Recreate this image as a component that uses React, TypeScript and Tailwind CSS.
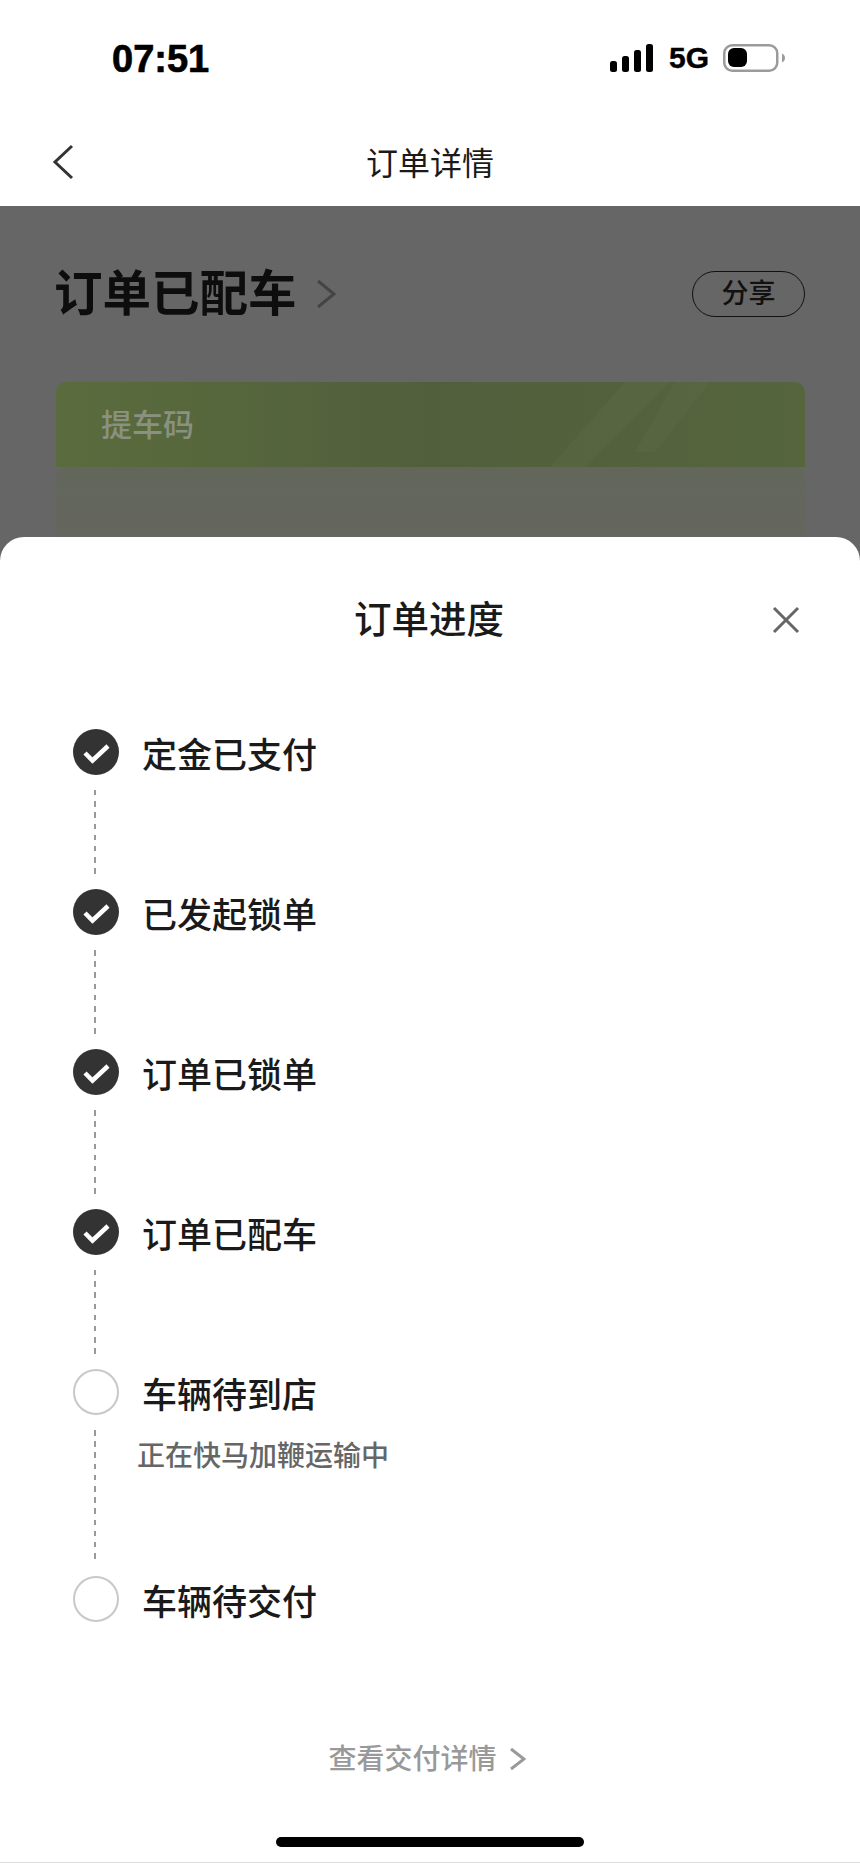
const CJK = "font-['Inter','Noto_Sans_CJK_SC',sans-serif]";

type Step = {
  label: string;
  done: boolean;
  note?: string;
};

const steps: Step[] = [
  { label: "定金已支付", done: true },
  { label: "已发起锁单", done: true },
  { label: "订单已锁单", done: true },
  { label: "订单已配车", done: true },
  { label: "车辆待到店", done: false, note: "正在快马加鞭运输中" },
  { label: "车辆待交付", done: false },
];

function StatusBar() {
  return (
    <div className="flex h-[90px] items-end justify-between pb-[16px] pl-[112px] pr-[75px]">
      <span className="font-['Liberation_Sans',sans-serif] text-[38px] leading-[30px] font-bold text-black [-webkit-text-stroke:0.7px_black]">07:51</span>
      <div className="mb-[2px] flex items-center">
        <svg width="44" height="28" viewBox="0 0 44 28" fill="#000">
          <rect x="0" y="17" width="7" height="11" rx="2.5" />
          <rect x="12" y="12" width="7" height="16" rx="2.5" />
          <rect x="24" y="6" width="7" height="22" rx="2.5" />
          <rect x="36" y="0" width="7" height="28" rx="2.5" />
        </svg>
        <span className="ml-[15px] font-['Liberation_Sans',sans-serif] text-[30px] leading-[28px] font-bold text-black [-webkit-text-stroke:0.4px_black]">5G</span>
        <svg className="ml-[14px]" width="62" height="28" viewBox="0 0 62 28">
          <rect x="1.25" y="1.25" width="53" height="25.5" rx="8" fill="none" stroke="#9b9b9b" strokeWidth="2.5" />
          <rect x="5" y="4" width="19" height="19" rx="6" fill="#000" />
          <path d="M59 9.500c1.800.8 3 2.500 3 4.500s-1.200 3.700-3 4.500z" fill="#9b9b9b" />
        </svg>
      </div>
    </div>
  );
}

function NavBar() {
  return (
    <div className="relative flex h-[116px] items-start justify-center pt-[56px]">
      <svg className="absolute left-[52px] top-[54px]" width="22" height="36" viewBox="0 0 22 36" fill="none" stroke="#333" strokeWidth="3">
        <path d="M20 2 3 18l17 16" />
      </svg>
      <span className={`${CJK} text-[32px] leading-[36px] text-[#1a1a1a]`}>订单详情</span>
    </div>
  );
}

function Backdrop() {
  return (
    <div className="h-[331px] overflow-hidden pl-[56px] pr-[55px] pt-[65px]">
      <div className="flex h-[46px] items-center justify-between">
        <div className="flex items-center">
          <span className={`${CJK} -ml-[2px] text-[48.500px] leading-[56px] font-semibold text-[#0d0d0d]`}>订单已配车</span>
          <svg className="ml-[19px]" width="20" height="30" viewBox="0 0 20 30" fill="none" stroke="#444" strokeWidth="3">
            <path d="m2 2 16 13L2 28" />
          </svg>
        </div>
        <div className="flex h-[46px] w-[113px] items-center justify-center rounded-[23px] border border-[#111]">
          <span className={`${CJK} text-[27px] leading-[32px] font-medium text-[#111]`}>分享</span>
        </div>
      </div>
      <div className="relative mt-[65px] h-[85px] rounded-t-[10px] bg-gradient-to-r from-[#5a6c3d] via-[#515f3c] to-[#55653c] px-[45px] pt-[25px]">
        <span className={`${CJK} text-[31px] leading-[36px] font-medium text-[#8a9180]`}>提车码</span>
        <svg className="absolute right-[85px] top-0" width="170" height="85" viewBox="0 0 170 85" fill="#fff" fillOpacity="0.025">
          <path d="M75 0h45L35 85H0z" />
          <path d="M125 0h35L105 70H85z" />
        </svg>
      </div>
      <div className="h-[80px] rounded-t-[10px] bg-gradient-to-b from-[#63675a] to-[#656660]" />
    </div>
  );
}

function StepIcon({ done }: { done: boolean }) {
  if (!done) {
    return <div className="h-[46px] w-[46px] shrink-0 rounded-full border-[2.5px] border-[#c8c8c8]" />;
  }
  return (
    <div className="flex h-[46px] w-[46px] shrink-0 items-center justify-center rounded-full bg-[#333]">
      <svg width="46" height="46" viewBox="0 0 46 46" fill="none" stroke="#fff" strokeWidth="4.500">
        <path d="m12 24 7.500 7.500L35 17" />
      </svg>
    </div>
  );
}

function StepRow({ step, last }: { step: Step; last: boolean }) {
  return (
    <div className="flex">
      <div className="flex w-[46px] shrink-0 flex-col items-center">
        <StepIcon done={step.done} />
        {!last && (
          <div
            className={`mt-[15px] mb-[15px] w-[2px] -translate-x-[1px] bg-[repeating-linear-gradient(to_bottom,#999_0,#999_5.500px,transparent_5.500px,transparent_11.200px)] ${
              step.note ? "h-[131px]" : "h-[84px]"
            }`}
          />
        )}
      </div>
      <div className="min-w-0">
        <div className={`${CJK} ml-[23px] mt-[3px] text-[35px] leading-[46px] font-medium text-[#1a1a1a]`}>{step.label}</div>
        {step.note && (
          <div className={`${CJK} ml-[18px] mt-[21px] text-[28px] leading-[34px] font-medium text-[#666]`}>{step.note}</div>
        )}
      </div>
    </div>
  );
}

function Sheet() {
  return (
    <div className="flex h-[1327px] flex-col rounded-t-[24px] bg-white">
      <div className="relative flex h-[192px] justify-center pt-[60px]">
        <span className={`${CJK} -ml-[2px] text-[37.500px] leading-[46px] font-medium text-[#1a1a1a]`}>订单进度</span>
        <svg className="absolute left-[772px] top-[69px]" width="28" height="28" viewBox="0 0 28 28" fill="none" stroke="#666" strokeWidth="3">
          <path d="m2 2 24 24M26 2 2 26" />
        </svg>
      </div>
      <div className="pl-[73px]">
        {steps.map((step, i) => (
          <StepRow key={step.label} step={step} last={i === steps.length - 1} />
        ))}
      </div>
      <div className="mt-[117px] flex items-center justify-center pr-[6px]">
        <span className={`${CJK} text-[28px] leading-[34px] font-medium text-[#999]`}>查看交付详情</span>
        <svg className="ml-[12px]" width="17" height="24" viewBox="0 0 17 24" fill="none" stroke="#999" strokeWidth="3">
          <path d="m2 2 13 10L2 22" />
        </svg>
      </div>
      <div className="mt-[61px] flex justify-center">
        <div className="h-[10px] w-[308px] rounded-full bg-black" />
      </div>
      <div className="mt-[15px] h-px bg-[#ddd]" />
    </div>
  );
}

export default function App() {
  return (
    <div className="h-[1864px] w-[860px] overflow-hidden bg-white">
      <StatusBar />
      <NavBar />
      <div className="bg-[#666]">
        <Backdrop />
        <Sheet />
      </div>
    </div>
  );
}
